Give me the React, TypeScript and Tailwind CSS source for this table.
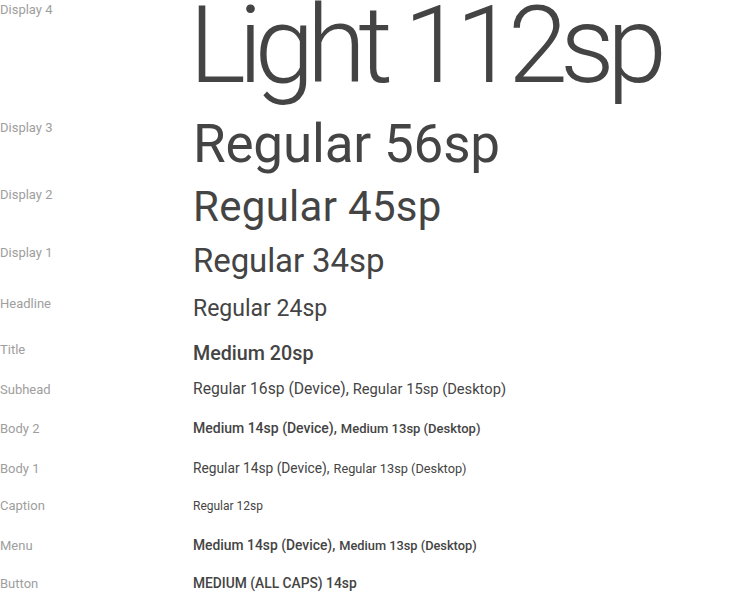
import React from "react";

const label = "w-[193px] shrink-0 text-[13px] leading-[19px] text-[#9e9e9e]";
const ink = "text-[#444444]";

export default function App() {
  return (
    <div
      className="w-[740px] h-[592px] bg-white overflow-hidden relative"
      style={{ fontFamily: "Roboto, 'Noto Sans', sans-serif" }}
    >
      <div className="flex flex-col">
        {/* Display 4 */}
        <div className="flex h-[118px]">
          <div className={label}>Display 4</div>
          <div className={`${ink} text-[108px] font-light leading-[90px] tracking-[-7.8px] -ml-[4px] whitespace-nowrap`}>
            Light 112sp
          </div>
        </div>
        {/* Display 3 */}
        <div className="flex h-[67px]">
          <div className={label}>Display 3</div>
          <div className={`${ink} text-[53px] leading-none tracking-[-0.2px] whitespace-nowrap`}>Regular 56sp</div>
        </div>
        {/* Display 2 */}
        <div className="flex h-[58px]">
          <div className={label}>Display 2</div>
          <div className={`${ink} text-[42px] leading-none tracking-[0.3px] mt-[1px] whitespace-nowrap`}>Regular 45sp</div>
        </div>
        {/* Display 1 */}
        <div className="flex h-[51px]">
          <div className={label}>Display 1</div>
          <div className={`${ink} text-[33px] leading-none tracking-[-0.1px] mt-[1px] whitespace-nowrap`}>Regular 34sp</div>
        </div>
        {/* Headline */}
        <div className="flex h-[46px]">
          <div className={label}>Headline</div>
          <div className={`${ink} text-[23px] leading-none mt-[3px] whitespace-nowrap`}>Regular 24sp</div>
        </div>
        {/* Title */}
        <div className="flex h-[39px]">
          <div className={label}>Title</div>
          <div className={`${ink} text-[19.7px] font-medium leading-none mt-[4px] whitespace-nowrap`}>Medium 20sp</div>
        </div>
        {/* Subhead */}
        <div className="flex h-[39px] items-baseline">
          <div className={label}>Subhead</div>
          <div className={`${ink} leading-[19px] whitespace-nowrap`}>
            <span className="text-[15.7px]">Regular 16sp (Device),</span>{" "}
            <span className="text-[14.7px]">Regular 15sp (Desktop)</span>
          </div>
        </div>
        {/* Body 2 */}
        <div className="flex h-[40px] items-baseline">
          <div className={label}>Body 2</div>
          <div className={`${ink} font-medium leading-[19px] whitespace-nowrap`}>
            <span className="text-[14px]">Medium 14sp (Device),</span>{" "}
            <span className="text-[13px]">Medium 13sp (Desktop)</span>
          </div>
        </div>
        {/* Body 1 */}
        <div className="flex h-[38px] items-baseline">
          <div className={label}>Body 1</div>
          <div className={`${ink} leading-[19px] whitespace-nowrap`}>
            <span className="text-[13.75px]">Regular 14sp (Device),</span>{" "}
            <span className="text-[12.75px]">Regular 13sp (Desktop)</span>
          </div>
        </div>
        {/* Caption */}
        <div className="flex h-[39px] items-baseline">
          <div className={label}>Caption</div>
          <div className={`${ink} text-[12px] leading-[19px] whitespace-nowrap`}>Regular 12sp</div>
        </div>
        {/* Menu */}
        <div className="flex h-[39px] items-baseline">
          <div className={label}>Menu</div>
          <div className={`${ink} font-medium leading-[19px] whitespace-nowrap`}>
            <span className="text-[13.85px]">Medium 14sp (Device),</span>{" "}
            <span className="text-[12.8px]">Medium 13sp (Desktop)</span>
          </div>
        </div>
        {/* Button */}
        <div className="flex h-[18px] items-baseline">
          <div className={label}>Button</div>
          <div className={`${ink} text-[13.8px] font-medium leading-[19px] whitespace-nowrap`}>MEDIUM (ALL CAPS) 14sp</div>
        </div>
      </div>
    </div>
  );
}
